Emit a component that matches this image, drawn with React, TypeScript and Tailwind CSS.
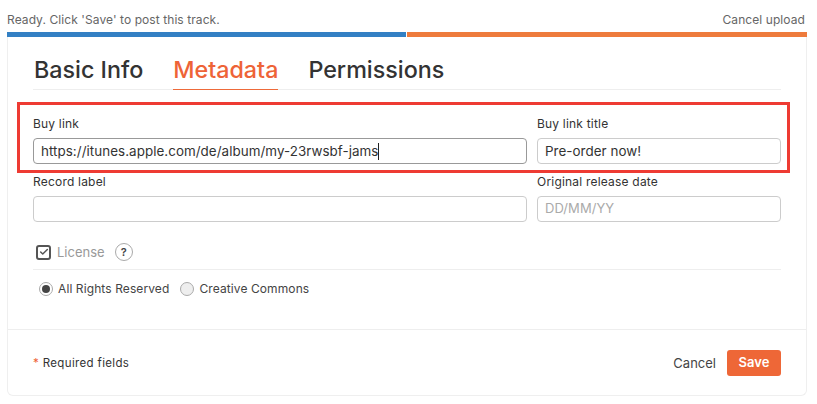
import React from 'react';
import { Check } from 'lucide-react';

const font = "font-['Inter','Liberation_Sans',sans-serif]";

const Field = ({ label, value, placeholder, active, wide }: { label: string; value?: string; placeholder?: string; active?: boolean; wide?: boolean }) => (
  <div className={wide ? 'w-[494px]' : 'w-[244px]'}>
    <div className="h-[17px] text-[12px] leading-[17px] tracking-[0.2px] text-[#333]">{label}</div>
    <div className={`mt-[6px] flex h-[26px] items-center rounded-[4px] border bg-white px-[7px] text-[13.4px] tracking-[0.05px] ${active ? 'border-[#999]' : 'border-[#ccc]'}`}>
      {value && <span className="text-[#333]">{value}</span>}
      {active && <span className="h-[17px] w-px bg-[#222]" />}
      {placeholder && <span className="text-[13px] text-[#aaa]">{placeholder}</span>}
    </div>
  </div>
);

const Radio = ({ label, checked }: { label: string; checked?: boolean }) => (
  <div className="flex items-center gap-[5px]">
    <span className={`flex h-[14px] w-[14px] items-center justify-center rounded-full border border-[#aaa] ${checked ? 'bg-white' : 'bg-[#eee]'}`}>
      {checked && <span className="h-[8px] w-[8px] rounded-full bg-[#444]" />}
    </span>
    <span className="text-[12px] tracking-[0.1px] text-[#444]">{label}</span>
  </div>
);

export default function App() {
  return (
    <div className={`h-[404px] w-[817px] overflow-hidden bg-white ${font}`}>
      <div className="ml-[7px] flex h-[32px] w-[798px] items-end justify-between pb-[4px] text-[12px] leading-[16px] tracking-[0.08px] text-[#666]">
        <span>Ready. Click 'Save' to post this track.</span>
        <span>Cancel upload</span>
      </div>
      <div className="ml-[7px] flex h-[5px] w-[800px] gap-px">
        <div className="w-[399px] bg-[#3380c4]" />
        <div className="w-[400px] bg-[#ee7b3c]" />
      </div>
      <div className="ml-[7px] h-[359px] w-[800px] rounded-b-[6px] border border-t-0 border-[#efefef]">
        <div className="px-[25px]">
          <div className="flex h-[53px] gap-[30px] border-b border-[#eee] pl-px pt-[16px] text-[23.3px] font-medium leading-[33px] text-[#333]">
            <span className="h-[37px]">Basic Info</span>
            <span className="h-[37px] border-b border-[#ee6a3a] text-[#ee6337]">Metadata</span>
            <span className="h-[37px]">Permissions</span>
          </div>
        </div>
        <div className="ml-[9px] mt-[12px] flex h-[71px] w-[773px] gap-[10px] border-[3px] border-[#ee3b33] pl-[13px] pt-[10px]">
          <Field label="Buy link" value="https://itunes.apple.com/de/album/my-23rwsbf-jams" active wide />
          <Field label="Buy link title" value="Pre-order now!" />
        </div>
        <div className="px-[25px]">
          <div className="flex gap-[10px]">
            <Field label="Record label" wide />
            <Field label="Original release date" placeholder="DD/MM/YY" />
          </div>
          <div className="mt-[19px] flex h-[29px] items-center border-b border-[#eee] pb-[6px] pl-[3px]">
            <span className="flex h-[15px] w-[15px] items-center justify-center rounded-[3px] border-2 border-[#555]">
              <Check size={10} strokeWidth={3.5} className="text-[#555]" />
            </span>
            <span className="ml-[6px] mt-px text-[13px] text-[#999]">License</span>
            <span className="ml-[10px] flex h-[18px] w-[18px] items-center justify-center rounded-full border border-[#aaa] text-[11px] font-semibold text-[#444]">?</span>
          </div>
          <div className="mt-[10px] flex gap-[11px] pl-[6px]">
            <Radio label="All Rights Reserved" checked />
            <Radio label="Creative Commons" />
          </div>
        </div>
        <div className="mt-[31px] flex h-[66px] items-center justify-between border-t border-[#eee] px-[25px] pt-px">
          <span className="mt-px text-[11.5px] tracking-[0.35px] text-[#333]"><span className="text-[#ee6337]">*</span> Required fields</span>
          <div className="flex items-center gap-[11px]">
            <span className="mt-px text-[13px] text-[#444]">Cancel</span>
            <button className="h-[26px] w-[54px] rounded-[3px] bg-[#ee6737] text-[13px] font-semibold text-white">Save</button>
          </div>
        </div>
      </div>
    </div>
  );
}
